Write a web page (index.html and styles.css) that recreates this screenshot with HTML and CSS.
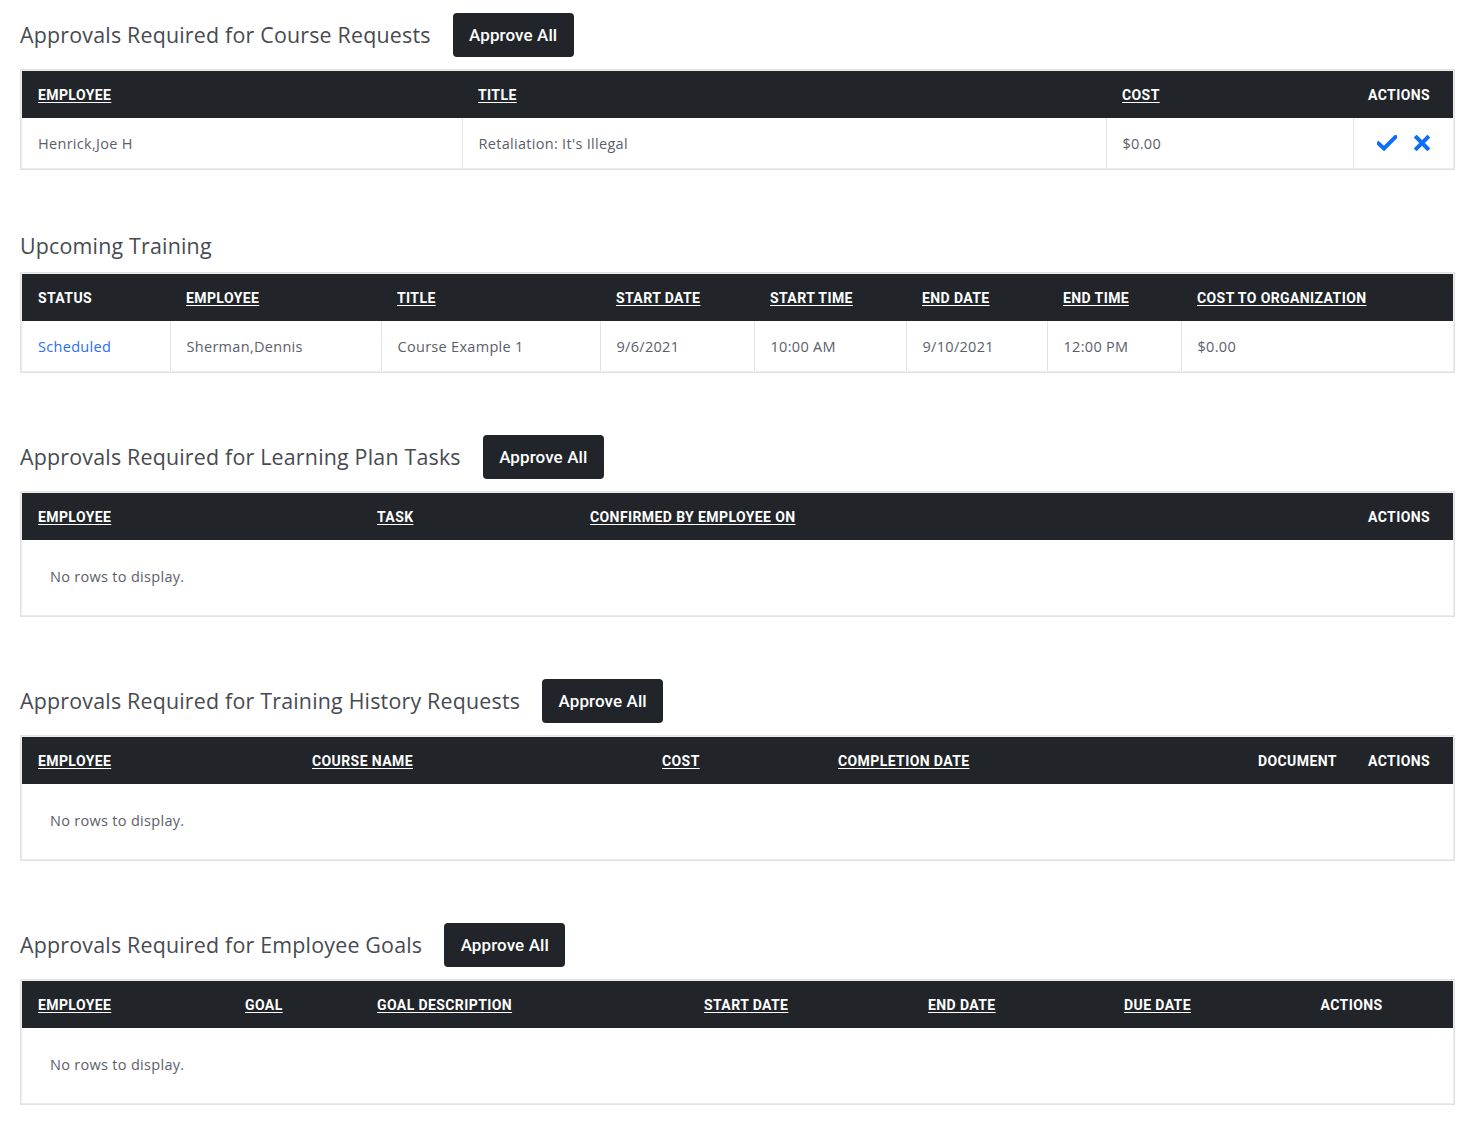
FILE: index.html
```html
<!DOCTYPE html>
<html lang="en">
<head>
<meta charset="utf-8">
<title>Approvals</title>
<link rel="stylesheet" href="styles.css">
</head>
<body>
<main class="page">

  <section class="section">
    <div class="section-head">
      <h2 class="section-title">Approvals Required for Course Requests</h2>
      <button class="btn-approve" type="button">Approve All</button>
    </div>
    <div class="grid-wrap">
      <table class="grid">
        <colgroup><col style="width:440px"><col style="width:644px"><col style="width:247px"><col style="width:100px"></colgroup>
        <thead>
          <tr><th><a>EMPLOYEE</a></th><th><a>TITLE</a></th><th><a>COST</a></th><th class="center">ACTIONS</th></tr>
        </thead>
        <tbody>
          <tr>
            <td>Henrick,Joe H</td>
            <td>Retaliation: It's Illegal</td>
            <td>$0.00</td>
            <td class="center actions">
              <svg class="ic" width="20" height="16" viewBox="0 0 20 16"><path d="M1.5 8.5 L7 13.5 L18.5 2" fill="none" stroke="#0d6efd" stroke-width="4" stroke-linejoin="miter" stroke-linecap="square"/></svg>
              <svg class="ic" width="16" height="16" viewBox="0 0 16 16"><path d="M2.5 2.5 L13.5 13.5 M13.5 2.5 L2.5 13.5" fill="none" stroke="#0d6efd" stroke-width="4" stroke-linecap="square"/></svg>
            </td>
          </tr>
        </tbody>
      </table>
    </div>
  </section>

  <section class="section">
    <div class="section-head plain">
      <h2 class="section-title">Upcoming Training</h2>
    </div>
    <div class="grid-wrap">
      <table class="grid">
        <colgroup><col style="width:148px"><col style="width:211px"><col style="width:219px"><col style="width:154px"><col style="width:152px"><col style="width:141px"><col style="width:134px"><col style="width:272px"></colgroup>
        <thead>
          <tr><th>STATUS</th><th><a>EMPLOYEE</a></th><th><a>TITLE</a></th><th><a>START DATE</a></th><th><a>START TIME</a></th><th><a>END DATE</a></th><th><a>END TIME</a></th><th><a>COST TO ORGANIZATION</a></th></tr>
        </thead>
        <tbody>
          <tr>
            <td><a class="link">Scheduled</a></td>
            <td>Sherman,Dennis</td>
            <td>Course Example 1</td>
            <td>9/6/2021</td>
            <td>10:00 AM</td>
            <td>9/10/2021</td>
            <td>12:00 PM</td>
            <td>$0.00</td>
          </tr>
        </tbody>
      </table>
    </div>
  </section>

  <section class="section">
    <div class="section-head">
      <h2 class="section-title">Approvals Required for Learning Plan Tasks</h2>
      <button class="btn-approve" type="button">Approve All</button>
    </div>
    <div class="grid-wrap">
      <table class="grid">
        <colgroup><col style="width:339px"><col style="width:213px"><col style="width:779px"><col style="width:100px"></colgroup>
        <thead>
          <tr><th><a>EMPLOYEE</a></th><th><a>TASK</a></th><th><a>CONFIRMED BY EMPLOYEE ON</a></th><th class="center">ACTIONS</th></tr>
        </thead>
        <tbody>
          <tr><td class="empty" colspan="4">No rows to display.</td></tr>
        </tbody>
      </table>
    </div>
  </section>

  <section class="section">
    <div class="section-head">
      <h2 class="section-title">Approvals Required for Training History Requests</h2>
      <button class="btn-approve" type="button">Approve All</button>
    </div>
    <div class="grid-wrap">
      <table class="grid">
        <colgroup><col style="width:274px"><col style="width:350px"><col style="width:176px"><col style="width:420px"><col style="width:111px"><col style="width:100px"></colgroup>
        <thead>
          <tr><th><a>EMPLOYEE</a></th><th><a>COURSE NAME</a></th><th><a>COST</a></th><th><a>COMPLETION DATE</a></th><th>DOCUMENT</th><th class="center">ACTIONS</th></tr>
        </thead>
        <tbody>
          <tr><td class="empty" colspan="6">No rows to display.</td></tr>
        </tbody>
      </table>
    </div>
  </section>

  <section class="section">
    <div class="section-head">
      <h2 class="section-title">Approvals Required for Employee Goals</h2>
      <button class="btn-approve" type="button">Approve All</button>
    </div>
    <div class="grid-wrap">
      <table class="grid">
        <colgroup><col style="width:207px"><col style="width:132px"><col style="width:327px"><col style="width:224px"><col style="width:196px"><col style="width:138px"><col style="width:207px"></colgroup>
        <thead>
          <tr><th><a>EMPLOYEE</a></th><th><a>GOAL</a></th><th><a>GOAL DESCRIPTION</a></th><th><a>START DATE</a></th><th><a>END DATE</a></th><th><a>DUE DATE</a></th><th class="center plain-center">ACTIONS</th></tr>
        </thead>
        <tbody>
          <tr><td class="empty" colspan="7">No rows to display.</td></tr>
        </tbody>
      </table>
    </div>
  </section>

</main>
</body>
</html>
```

FILE: styles.css
```css
* { box-sizing: border-box; }

html, body {
  margin: 0;
  padding: 0;
  background: #ffffff;
}

body {
  font-family: "Open Sans", "Liberation Sans", sans-serif;
  color: #5b5e6b;
}

.page {
  padding: 13px 20px 20px 20px;
  display: flex;
  flex-direction: column;
  gap: 62px;
}

.section {
  display: flex;
  flex-direction: column;
  gap: 12px;
}

.section-head {
  display: flex;
  align-items: center;
  gap: 22px;
  height: 44px;
}

.section-head.plain {
  height: 28px;
  gap: 0;
}

.section-title {
  margin: 0;
  font-family: "Open Sans", "Liberation Sans", sans-serif;
  font-size: 21.4px;
  font-weight: 400;
  color: #474a52;
  letter-spacing: 0.2px;
  line-height: 28px;
}

.btn-approve {
  height: 44px;
  width: 121px;
  padding: 0;
  border: none;
  border-radius: 4px;
  background: #212529;
  color: #ffffff;
  font-family: "Roboto", "Liberation Sans", sans-serif;
  font-size: 17px;
  font-weight: 500;
  letter-spacing: 0.1px;
  cursor: pointer;
}

.grid-wrap {
  border: 1px solid #e2e2e2;
  padding: 1px;
  background: #fff;
  box-shadow: inset 0 0 0 1px #ececec;
}

.grid {
  width: 1431px;
  table-layout: fixed;
  border-collapse: collapse;
}

.grid thead th {
  background: #212529;
  color: #ffffff;
  height: 47px;
  padding: 0 16px;
  text-align: left;
  font-family: "Roboto", "Liberation Sans", sans-serif;
  font-size: 14px;
  font-weight: 700;
  letter-spacing: 0.4px;
  white-space: nowrap;
  vertical-align: middle;
}

.grid thead th a {
  color: #ffffff;
  text-decoration: underline;
  text-underline-offset: 2px;
  text-decoration-thickness: 1px;
}

.grid .center {
  text-align: center;
  padding: 0 8px 0 0;
}

.grid .plain-center {
  padding: 0 0 0 4px;
}

.grid tbody td {
  height: 50px;
  padding: 0 16px;
  font-size: 14.5px;
  color: #5b5e6b;
  letter-spacing: 0.3px;
  border-left: 1px solid #e3e3e3;
  vertical-align: middle;
  white-space: nowrap;
}

.grid tbody td:first-child {
  border-left: none;
}

.grid tbody td.empty {
  height: 75px;
  padding: 0 28px 2px 28px;
  border-left: none;
}

.link {
  color: #2b6ef0;
  text-decoration: none;
}

.actions {
  font-size: 0;
}

.grid tbody td.actions {
  padding: 0 0 3px 0;
}

.ic {
  display: inline-block;
  vertical-align: middle;
  margin: 0;
}

.ic + .ic {
  margin-left: 13px;
}
```
